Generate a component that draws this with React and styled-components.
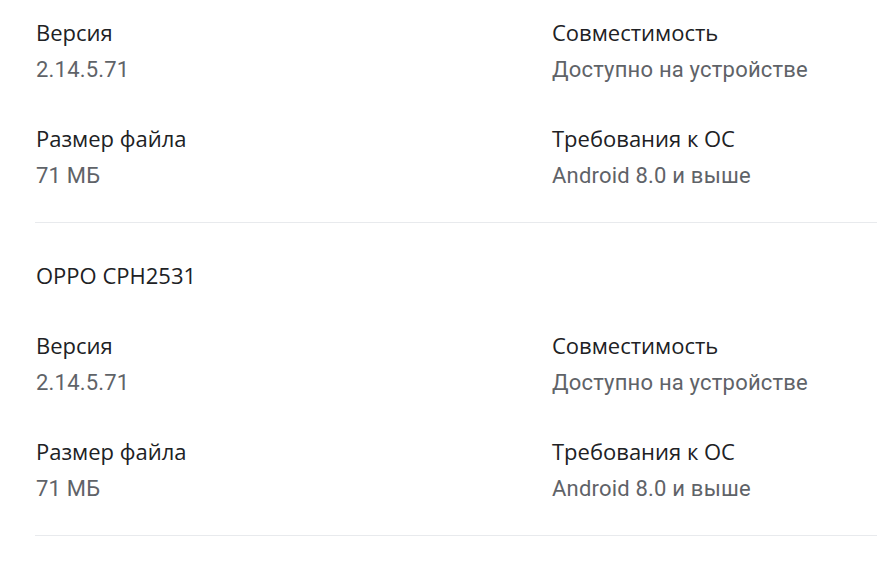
import styled, { createGlobalStyle } from 'styled-components'

const GlobalStyle = createGlobalStyle`
  body{
    margin:0;
    background:#fff;
  }
`

const Page = styled.div`
  padding-left:36px;
`

const Section = styled.div`
  display:grid;
  grid-template-columns: 516px 1fr;
  row-gap:40px;
  padding:18px 0 32px 0;
  margin-left:-1px;
  padding-left:1px;
  border-bottom:1px solid #e8eaed;
`

const Item = styled.div`
  display:flex;
  flex-direction:column;
`

const Label = styled.div`
  font-family:"Open Sans", Roboto, sans-serif;
  font-size:22px;
  line-height:28px;
  color:#202124;
`

const Value = styled.div`
  font-family:Roboto, "Noto Sans", sans-serif;
  font-size:22px;
  line-height:28px;
  margin-top:10px;
  color:#5f6368;
  letter-spacing:0.2px;
`

const Device = styled.div`
  font-family:"Open Sans", Roboto, sans-serif;
  font-size:22px;
  line-height:28px;
  color:#202124;
  padding-top:38px;
  margin-bottom:24px;
`

const details = [
  { label: 'Версия', value: '2.14.5.71' },
  { label: 'Совместимость', value: 'Доступно на устройстве' },
  { label: 'Размер файла', value: '71 МБ' },
  { label: 'Требования к ОС', value: 'Android 8.0 и выше' },
]

const Details = () => (
  <Section>
    {details.map(d =>
      <Item key={d.label}>
        <Label>{d.label}</Label>
        <Value>{d.value}</Value>
      </Item>
    )}
  </Section>
)

export default function App() {
  return (
    <Page>
      <GlobalStyle />
      <Details />
      <Device>OPPO CPH2531</Device>
      <Details />
    </Page>
  )
}
